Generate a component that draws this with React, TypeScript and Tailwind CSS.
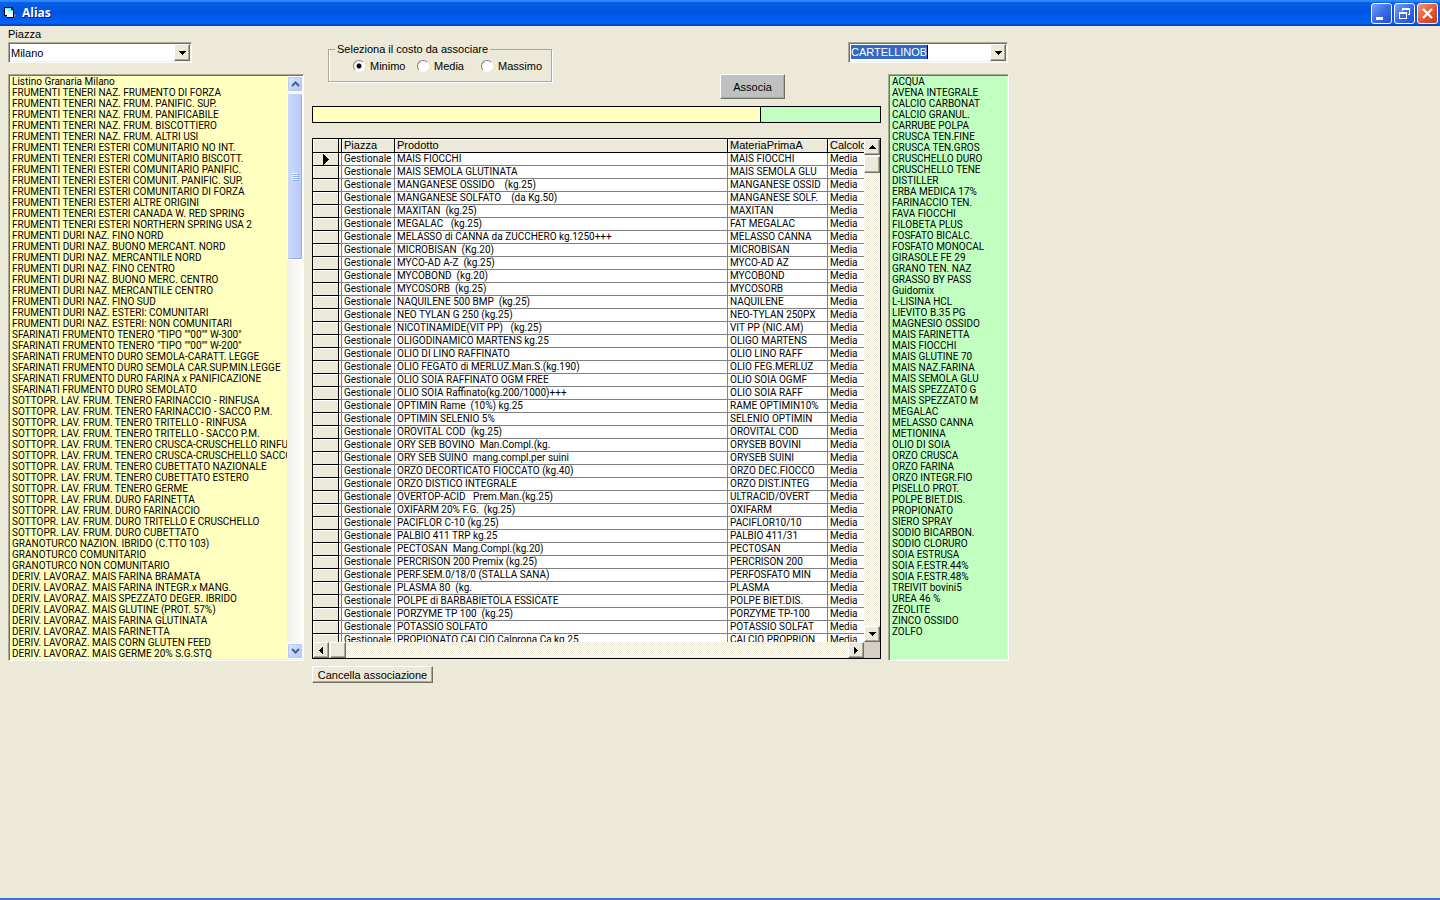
import { useState } from 'react';
import type { ReactNode } from 'react';

const listino = [
  'Listino Granaria Milano',
  'FRUMENTI TENERI NAZ. FRUMENTO DI FORZA',
  'FRUMENTI TENERI NAZ. FRUM. PANIFIC. SUP.',
  'FRUMENTI TENERI NAZ. FRUM. PANIFICABILE',
  'FRUMENTI TENERI NAZ. FRUM. BISCOTTIERO',
  'FRUMENTI TENERI NAZ. FRUM. ALTRI USI',
  'FRUMENTI TENERI ESTERI COMUNITARIO NO INT.',
  'FRUMENTI TENERI ESTERI COMUNITARIO BISCOTT.',
  'FRUMENTI TENERI ESTERI COMUNITARIO PANIFIC.',
  'FRUMENTI TENERI ESTERI COMUNIT. PANIFIC. SUP.',
  'FRUMENTI TENERI ESTERI COMUNITARIO DI FORZA',
  'FRUMENTI TENERI ESTERI ALTRE ORIGINI',
  'FRUMENTI TENERI ESTERI CANADA W. RED SPRING',
  'FRUMENTI TENERI ESTERI NORTHERN SPRING USA 2',
  'FRUMENTI DURI NAZ. FINO NORD',
  'FRUMENTI DURI NAZ. BUONO MERCANT. NORD',
  'FRUMENTI DURI NAZ. MERCANTILE NORD',
  'FRUMENTI DURI NAZ. FINO CENTRO',
  'FRUMENTI DURI NAZ. BUONO MERC. CENTRO',
  'FRUMENTI DURI NAZ. MERCANTILE CENTRO',
  'FRUMENTI DURI NAZ. FINO SUD',
  'FRUMENTI DURI NAZ. ESTERI: COMUNITARI',
  'FRUMENTI DURI NAZ. ESTERI: NON COMUNITARI',
  'SFARINATI FRUMENTO TENERO "TIPO ""00"" W-300"',
  'SFARINATI FRUMENTO TENERO "TIPO ""00"" W-200"',
  'SFARINATI FRUMENTO DURO SEMOLA-CARATT. LEGGE',
  'SFARINATI FRUMENTO DURO SEMOLA CAR.SUP.MIN.LEGGE',
  'SFARINATI FRUMENTO DURO FARINA x PANIFICAZIONE',
  'SFARINATI FRUMENTO DURO SEMOLATO',
  'SOTTOPR. LAV. FRUM. TENERO FARINACCIO - RINFUSA',
  'SOTTOPR. LAV. FRUM. TENERO FARINACCIO - SACCO P.M.',
  'SOTTOPR. LAV. FRUM. TENERO TRITELLO - RINFUSA',
  'SOTTOPR. LAV. FRUM. TENERO TRITELLO - SACCO P.M.',
  'SOTTOPR. LAV. FRUM. TENERO CRUSCA-CRUSCHELLO RINFUSA',
  'SOTTOPR. LAV. FRUM. TENERO CRUSCA-CRUSCHELLO SACCO',
  'SOTTOPR. LAV. FRUM. TENERO CUBETTATO NAZIONALE',
  'SOTTOPR. LAV. FRUM. TENERO CUBETTATO ESTERO',
  'SOTTOPR. LAV. FRUM. TENERO GERME',
  'SOTTOPR. LAV. FRUM. DURO FARINETTA',
  'SOTTOPR. LAV. FRUM. DURO FARINACCIO',
  'SOTTOPR. LAV. FRUM. DURO TRITELLO E CRUSCHELLO',
  'SOTTOPR. LAV. FRUM. DURO CUBETTATO',
  'GRANOTURCO NAZION. IBRIDO (C.TTO 103)',
  'GRANOTURCO COMUNITARIO',
  'GRANOTURCO NON COMUNITARIO',
  'DERIV. LAVORAZ. MAIS FARINA BRAMATA',
  'DERIV. LAVORAZ. MAIS FARINA INTEGR.x MANG.',
  'DERIV. LAVORAZ. MAIS SPEZZATO DEGER. IBRIDO',
  'DERIV. LAVORAZ. MAIS GLUTINE (PROT. 57%)',
  'DERIV. LAVORAZ. MAIS FARINA GLUTINATA',
  'DERIV. LAVORAZ. MAIS FARINETTA',
  'DERIV. LAVORAZ. MAIS CORN GLUTEN FEED',
  'DERIV. LAVORAZ. MAIS GERME 20% S.G.STQ',
];

const materie = [
  'ACQUA', 'AVENA INTEGRALE', 'CALCIO CARBONAT', 'CALCIO GRANUL.', 'CARRUBE POLPA',
  'CRUSCA TEN.FINE', 'CRUSCA TEN.GROS', 'CRUSCHELLO DURO', 'CRUSCHELLO TENE', 'DISTILLER',
  'ERBA MEDICA 17%', 'FARINACCIO TEN.', 'FAVA FIOCCHI', 'FILOBETA PLUS', 'FOSFATO BICALC.',
  'FOSFATO MONOCAL', 'GIRASOLE FE 29', 'GRANO TEN. NAZ', 'GRASSO BY PASS', 'Guidomix',
  'L-LISINA HCL', 'LIEVITO B.35 PG', 'MAGNESIO OSSIDO', 'MAIS FARINETTA', 'MAIS FIOCCHI',
  'MAIS GLUTINE 70', 'MAIS NAZ.FARINA', 'MAIS SEMOLA GLU', 'MAIS SPEZZATO G', 'MAIS SPEZZATO M',
  'MEGALAC', 'MELASSO CANNA', 'METIONINA', 'OLIO DI SOIA', 'ORZO CRUSCA',
  'ORZO FARINA', 'ORZO INTEGR.FIO', 'PISELLO PROT.', 'POLPE BIET.DIS.', 'PROPIONATO',
  'SIERO SPRAY', 'SODIO BICARBON.', 'SODIO CLORURO', 'SOIA ESTRUSA', 'SOIA F.ESTR.44%',
  'SOIA F.ESTR.48%', 'TREIVIT bovini5', 'UREA 46 %', 'ZEOLITE', 'ZINCO OSSIDO', 'ZOLFO',
];

// [Prodotto, MateriaPrimaA]
const associazioni: [string, string][] = [
  ['MAIS FIOCCHI', 'MAIS FIOCCHI'],
  ['MAIS SEMOLA GLUTINATA', 'MAIS SEMOLA GLU'],
  ['MANGANESE OSSIDO    (kg.25)', 'MANGANESE OSSID'],
  ['MANGANESE SOLFATO    (da Kg.50)', 'MANGANESE SOLF.'],
  ['MAXITAN  (kg.25)', 'MAXITAN'],
  ['MEGALAC   (kg.25)', 'FAT MEGALAC'],
  ['MELASSO di CANNA da ZUCCHERO kg.1250+++', 'MELASSO CANNA'],
  ['MICROBISAN  (Kg.20)', 'MICROBISAN'],
  ['MYCO-AD A-Z  (kg.25)', 'MYCO-AD AZ'],
  ['MYCOBOND  (kg.20)', 'MYCOBOND'],
  ['MYCOSORB  (kg.25)', 'MYCOSORB'],
  ['NAQUILENE 500 BMP  (kg.25)', 'NAQUILENE'],
  ['NEO TYLAN G 250 (kg.25)', 'NEO-TYLAN 250PX'],
  ['NICOTINAMIDE(VIT PP)   (kg.25)', 'VIT PP (NIC.AM)'],
  ['OLIGODINAMICO MARTENS kg.25', 'OLIGO MARTENS'],
  ['OLIO DI LINO RAFFINATO', 'OLIO LINO RAFF'],
  ['OLIO FEGATO di MERLUZ.Man.S.(kg.190)', 'OLIO FEG.MERLUZ'],
  ['OLIO SOIA RAFFINATO OGM FREE', 'OLIO SOIA OGMF'],
  ['OLIO SOIA Raffinato(kg.200/1000)+++', 'OLIO SOIA RAFF'],
  ['OPTIMIN Rame  (10%) kg.25', 'RAME OPTIMIN10%'],
  ['OPTIMIN SELENIO 5%', 'SELENIO OPTIMIN'],
  ['OROVITAL COD  (kg.25)', 'OROVITAL COD'],
  ['ORY SEB BOVINO  Man.Compl.(kg.', 'ORYSEB BOVINI'],
  ['ORY SEB SUINO  mang.compl.per suini', 'ORYSEB SUINI'],
  ['ORZO DECORTICATO FIOCCATO (kg.40)', 'ORZO DEC.FIOCCO'],
  ['ORZO DISTICO INTEGRALE', 'ORZO DIST.INTEG'],
  ['OVERTOP-ACID   Prem.Man.(kg.25)', 'ULTRACID/OVERT'],
  ['OXIFARM 20% F.G.  (kg.25)', 'OXIFARM'],
  ['PACIFLOR C-10 (kg.25)', 'PACIFLOR10/10'],
  ['PALBIO 411 TRP kg.25', 'PALBIO 411/31'],
  ['PECTOSAN  Mang.Compl.(kg.20)', 'PECTOSAN'],
  ['PERCRISON 200 Premix (kg.25)', 'PERCRISON 200'],
  ['PERF.SEM.0/18/0 (STALLA SANA)', 'PERFOSFATO MIN'],
  ['PLASMA 80  (kg.', 'PLASMA'],
  ['POLPE di BARBABIETOLA ESSICATE', 'POLPE BIET.DIS.'],
  ['PORZYME TP 100  (kg.25)', 'PORZYME TP-100'],
  ['POTASSIO SOLFATO', 'POTASSIO SOLFAT'],
  ['PROPIONATO CALCIO Calprona Ca kg.25', 'CALCIO PROPRION'],
];

const sunken =
  'border border-t-[#aca899] border-l-[#aca899] border-r-white border-b-white shadow-[inset_1px_1px_#716f64,inset_-1px_-1px_#f1efe2]';
const raised =
  'border border-t-white border-l-white border-r-[#716f64] border-b-[#716f64] shadow-[inset_-1px_-1px_#aca899]';
const hatch = 'bg-[repeating-conic-gradient(#ece9d8_0_25%,#ffffff_0_50%)] bg-size-[2px_2px]';
// narrow face for the dense lists and grid rows
const denseText = "font-['Roboto','Liberation_Sans',sans-serif] text-[10px] whitespace-pre";

type Direction = 'up' | 'down' | 'left' | 'right';

const arrowPaths: Record<Direction, string> = {
  up: 'M3 0h1v1h1v1h1v1h1v1H0V3h1V2h1V1h1z',
  down: 'M0 0h7v1H6v1H5v1H4v1H3V3H2V2H1V1H0z',
  left: 'M3 0h1v7H3V6H2V5H1V4H0V3h1V2h1V1h1z',
  right: 'M0 0h1v1h1v1h1v1h1v1H3v1H2v1H1v1H0z',
};

function Arrow({ direction }: { direction: Direction }) {
  const vertical = direction === 'up' || direction === 'down';
  const w = vertical ? 7 : 4;
  const h = vertical ? 4 : 7;
  return (
    <svg width={w} height={h} viewBox={`0 0 ${w} ${h}`} shapeRendering="crispEdges" aria-hidden="true">
      <path d={arrowPaths[direction]} fill="#000" />
    </svg>
  );
}

function ClassicButton({ direction }: { direction: Direction }) {
  return (
    <button
      type="button"
      aria-label={`Scorri ${direction}`}
      className={`flex size-4 shrink-0 items-center justify-center bg-[#ece9d8] ${raised}`}
    >
      <Arrow direction={direction} />
    </button>
  );
}

function LunaButton({ up }: { up?: boolean }) {
  return (
    <button
      type="button"
      aria-label={up ? 'Scorri su' : 'Scorri giù'}
      className="flex h-4 w-full shrink-0 items-center justify-center rounded-xs border border-white bg-linear-to-br from-[#dce6ff] to-[#b0c6f8] shadow-[inset_0_0_0_1px_#b4c8f6]"
    >
      <svg width="9" height="6" viewBox="0 0 9 6" aria-hidden="true">
        <path d={up ? 'M1 5l3.500-3.500L8 5' : 'M1 1l3.500 3.500L8 1'} fill="none" stroke="#4d6185" strokeWidth="2" />
      </svg>
    </button>
  );
}

interface ComboProps {
  id: string;
  value: string;
  selected?: boolean;
  className?: string;
}

function Combo({ id, value, selected, className }: ComboProps) {
  return (
    <div className={`relative flex h-[21px] items-center bg-white p-px ${sunken} ${className ?? ''}`}>
      {selected ? (
        <span className="pointer-events-none absolute top-[2px] left-[2px] border-r border-black bg-[#316ac5] text-[11px] leading-[14px] text-white">
          {value}
        </span>
      ) : null}
      <select
        id={id}
        aria-label={id}
        defaultValue={value}
        className={`h-full w-full appearance-none bg-transparent pl-px text-[11px] leading-[14px] outline-none ${selected ? 'text-transparent' : 'text-black'}`}
      >
        <option value={value}>{value}</option>
      </select>
      <span
        className={`pointer-events-none absolute inset-y-px right-px flex w-4 items-center justify-center bg-[#ece9d8] ${raised}`}
      >
        <Arrow direction="down" />
      </span>
    </div>
  );
}

function ListBox({ label, items, className, children }: { label: string; items: string[]; className: string; children?: ReactNode }) {
  return (
    <div className={`flex py-px pr-0 pl-px ${sunken} ${className}`}>
      <ul role="listbox" aria-label={label} className="min-w-0 flex-1 overflow-hidden pl-[2px]">
        {items.map((item) => (
          <li key={item} role="option" aria-selected={false} className={`leading-[11px] ${denseText}`}>
            {item}
          </li>
        ))}
      </ul>
      {children}
    </div>
  );
}

function TitleBar() {
  const box = 'flex size-[21px] items-center justify-center rounded-[3px] border border-white';
  return (
    <header className="flex h-[26px] items-center bg-linear-to-b from-[#0a5fe8] via-[#0054e3] to-[#0066ff] pr-[2px] pl-[3px] shadow-[inset_0_2px_1px_#2e8aff,inset_0_-2px_1px_#0046c8]">
      <svg width="14" height="14" viewBox="0 0 14 14" shapeRendering="crispEdges" aria-hidden="true">
        <path d="M1 1h9v2h1v9H4v-2H1z" fill="#000" />
        <path d="M2 3h6v6H2zM4 5h6v6H4z" fill="#fff" />
        <path d="M2 2h6v1H2zM5 4h5v1H5z" fill="#3ff" />
        <path d="M11 8h1v1h1v1h-1v1h-1z" fill="#808080" />
      </svg>
      <h1 className="ml-[5px] flex-1 font-['Open_Sans',sans-serif] text-[12px] font-bold text-white [text-shadow:1px_1px_#0a1883]">
        Alias
      </h1>
      <div className="flex gap-[2px]">
        <button type="button" aria-label="Riduci a icona" className={`${box} bg-linear-to-br from-[#7b9ff5] via-[#3b6ce8] to-[#1f4fd8]`}>
          <svg width="19" height="19" viewBox="0 0 19 19" aria-hidden="true">
            <path d="M4 13h7v3H4z" fill="#fff" />
          </svg>
        </button>
        <button type="button" aria-label="Ripristina" className={`${box} bg-linear-to-br from-[#7b9ff5] via-[#3b6ce8] to-[#1f4fd8]`}>
          <svg width="19" height="19" viewBox="0 0 19 19" shapeRendering="crispEdges" aria-hidden="true">
            <path d="M7 4h8v7h-2v-1h1V6H8v1H7zM4 8h8v7H4zM5 10v4h6v-4z" fill="#fff" fillRule="evenodd" />
          </svg>
        </button>
        <button type="button" aria-label="Chiudi" className={`${box} bg-linear-to-br from-[#f0957a] via-[#e25a38] to-[#c63a16]`}>
          <svg width="19" height="19" viewBox="0 0 19 19" aria-hidden="true">
            <path d="M5 5l9 9M14 5l-9 9" stroke="#fff" strokeWidth="2.400" />
          </svg>
        </button>
      </div>
    </header>
  );
}

function Grid() {
  const head = 'border-r border-b border-black bg-[#ece9d8] p-0 pl-[2px] text-left text-[11px] leading-[13px] font-normal shadow-[inset_1px_1px_#fff]';
  const cell = `overflow-hidden border-r border-b border-[#808080] p-0 pl-[2px] leading-[12px] ${denseText}`;
  return (
    <div className="border border-black bg-white">
      <div className="flex h-[503px]">
        <div className="min-w-0 flex-1 overflow-hidden">
          <table className="w-full table-fixed border-separate border-spacing-0">
            <colgroup>
              <col className="w-[26px]" />
              <col className="w-[3px]" />
              <col className="w-[53px]" />
              <col />
              <col className="w-[100px]" />
              <col className="w-[36px]" />
            </colgroup>
            <thead>
              <tr className="h-[14px]">
                <td className={head} />
                <td className="border-r border-b border-black bg-[#ece9d8] p-0" />
                <th scope="col" className={head}>Piazza</th>
                <th scope="col" className={head}>Prodotto</th>
                <th scope="col" className={head}>MateriaPrimaA</th>
                <th scope="col" className={`${head} overflow-hidden border-r-0`}>Calcolo</th>
              </tr>
            </thead>
            <tbody>
              {associazioni.map(([prodotto, materia], i) => (
                <tr key={prodotto} className="h-[13px]">
                  <td className="border-r border-b border-black bg-[#ece9d8] p-0 shadow-[inset_1px_1px_#fff]">
                    {i === 0 ? (
                      <svg width="6" height="11" viewBox="0 0 6 11" className="ml-[10px]" shapeRendering="crispEdges" aria-label="Riga corrente">
                        <path d="M0 0h1v1h1v1h1v1h1v1h1v1h1v1H5v1H4v1H3v1H2v1H1v1H0z" fill="#000" />
                      </svg>
                    ) : null}
                  </td>
                  <td className="border-r border-b border-[#808080] p-0" />
                  <td className={cell}>Gestionale</td>
                  <td className={cell}>{prodotto}</td>
                  <td className={cell}>{materia}</td>
                  <td className={`${cell} border-r-0`}>Media</td>
                </tr>
              ))}
            </tbody>
          </table>
        </div>
        <div className={`flex w-4 flex-col ${hatch}`}>
          <ClassicButton direction="up" />
          <div className={`mt-px h-[17px] bg-[#ece9d8] ${raised}`} />
          <div className="flex-1" />
          <ClassicButton direction="down" />
        </div>
      </div>
      <div className={`flex h-4 ${hatch}`}>
        <ClassicButton direction="left" />
        <div className={`ml-px w-4 bg-[#ece9d8] ${raised}`} />
        <div className="flex-1" />
        <ClassicButton direction="right" />
        <div className="w-4 bg-[#d4d0c8]" />
      </div>
    </div>
  );
}

export default function App() {
  const [costo, setCosto] = useState('Minimo');

  return (
    <div className="flex min-h-screen flex-col border-b-2 border-[#3a74cf] bg-[#ece9d8] font-['Liberation_Sans',Arial,sans-serif] text-[11px] text-black">
      <TitleBar />
      <main className="flex w-full max-w-[1017px] gap-2 px-2">
        <section className="flex w-[296px] shrink-0 flex-col items-start">
          <label htmlFor="piazza" className="leading-[16px]">Piazza</label>
          <Combo id="piazza" value="Milano" className="w-[184px]" />
          <ListBox label="Listino" items={listino} className="mt-[11px] w-full bg-[#ffffc0]">
            <div className="flex w-4 flex-col bg-linear-to-r from-[#f0efea] to-[#fdfdfb]">
              <LunaButton up />
              <div className="mt-px flex h-[167px] items-center justify-center rounded-xs border border-white bg-linear-to-r from-[#cad8fc] to-[#b8cbf8] shadow-[inset_-1px_-1px_#98b0e8]">
                <svg width="7" height="8" viewBox="0 0 7 8" shapeRendering="crispEdges" aria-hidden="true">
                  <path d="M0 0h6v1H0zM0 2h6v1H0zM0 4h6v1H0zM0 6h6v1H0z" fill="#eef4fe" />
                  <path d="M1 1h6v1H1zM1 3h6v1H1zM1 5h6v1H1zM1 7h6v1H1z" fill="#8cb0f8" />
                </svg>
              </div>
              <div className="flex-1" />
              <LunaButton />
            </div>
          </ListBox>
        </section>

        <section className="grid min-w-0 flex-1 grid-cols-[1fr_33px_7px_121px] grid-rows-[32px_32px_auto_auto] pt-4">
          <div className="col-start-1 row-span-2 row-start-1 flex items-start pl-4">
            <fieldset className="h-[40px] w-[223px] border border-[#aca899] px-[6px] shadow-[inset_1px_0_#fff,1px_1px_#fff]">
              <legend className="px-[2px] leading-[14px] whitespace-nowrap">Seleziona il costo da associare</legend>
              <div className="flex pt-[3px] pl-[18px]">
                {['Minimo', 'Media', 'Massimo'].map((nome) => (
                  <label key={nome} className="flex w-16 shrink-0 items-center gap-[5px] leading-[14px]">
                    <input
                      type="radio"
                      name="costo"
                      checked={costo === nome}
                      onChange={() => setCosto(nome)}
                      className="size-[12px] shrink-0 appearance-none rounded-full border border-t-[#808080] border-l-[#808080] border-r-white border-b-white bg-white checked:bg-[radial-gradient(circle,#000_2px,#fff_3px)]"
                    />
                    {nome}
                  </label>
                ))}
              </div>
            </fieldset>
            <button type="button" className={`mt-8 mr-[63px] ml-auto h-[25px] w-[65px] bg-[#c0c0c0] pt-px ${raised}`}>
              Associa
            </button>
          </div>

          <Combo
            id="cartellino"
            value="CARTELLINOB"
            selected
            className="col-span-3 col-start-2 row-start-1 mr-px w-[160px] justify-self-end"
          />

          <ListBox label="Materie prime" items={materie} className="col-start-4 row-span-2 row-start-2 bg-[#c0ffc0]" />

          <div className="col-span-2 col-start-1 row-start-3 flex flex-col pb-[2px]">
            <div className="mb-[15px] flex h-[17px] border border-black">
              <input aria-label="Voce listino" readOnly className="min-w-0 flex-1 border-r border-black bg-[#ffffc0] px-1 outline-none" />
              <input aria-label="Materia prima" readOnly className="w-[119px] bg-[#c0ffc0] px-1 outline-none" />
            </div>
            <Grid />
          </div>

          <button
            type="button"
            className={`col-start-1 row-start-4 mt-[5px] h-[17px] w-[121px] bg-[#ece9d8] leading-[14px] ${raised}`}
          >
            Cancella associazione
          </button>
        </section>
      </main>
    </div>
  );
}
